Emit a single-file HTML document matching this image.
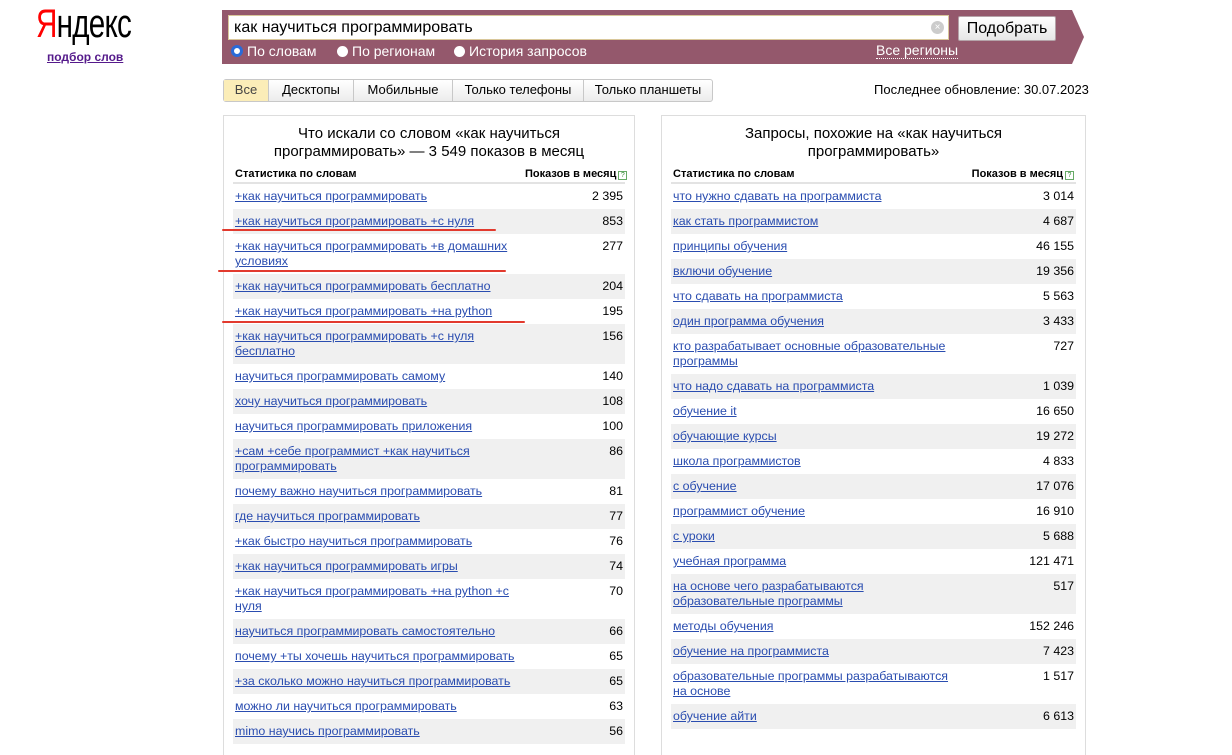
<!DOCTYPE html>
<html><head><meta charset="utf-8"><style>
*{box-sizing:border-box;margin:0;padding:0}
body{width:1232px;height:746px;overflow:hidden;background:#fff;font-family:"Liberation Sans",Arial,sans-serif;font-size:13px;color:#000;position:relative}
.logo{position:absolute;left:36px;top:2px;font-size:40px;letter-spacing:-1px;transform:scaleX(0.74);transform-origin:left top}
.logo b{color:#f00;font-weight:normal}
.sub{position:absolute;left:47px;top:50px;font-size:12px;font-weight:bold;color:#551a8b;text-decoration:underline}
.band{position:absolute;left:222px;top:10px;width:850px;height:54px;background:#94586c}
.tip{position:absolute;left:1072px;top:10px;width:0;height:0;border-top:27px solid transparent;border-bottom:27px solid transparent;border-left:12px solid #94586c}
.inp{position:absolute;left:228px;top:15px;width:721px;height:25px;background:#fff;border:1px solid #d9c79a;font-size:16px;padding:3px 5px}
.clr{position:absolute;left:931px;top:21px;width:13px;height:13px;border-radius:50%;background:#ccc;color:#fff;font-size:10px;line-height:13px;text-align:center}
.btn{position:absolute;left:958px;top:16px;width:98px;height:25px;background:linear-gradient(#fff,#e6e6e6);border:1px solid #b5a3a9;border-radius:2px;font-size:16px;text-align:center;line-height:23px}
.rad{position:absolute;top:43px;color:#fff;font-size:14px}
.rad i{display:inline-block;width:11px;height:11px;border-radius:50%;background:#fff;margin-right:4px;vertical-align:-1px}
.allr{position:absolute;left:876px;top:43px;color:#fff;font-size:14px;border-bottom:1px dotted #fff;line-height:15px}
.tabs{position:absolute;left:223px;top:79px;height:23px;display:flex;border:1px solid #c8c8c8;border-radius:3px;background:linear-gradient(#fff,#ececec)}
.tabs div{height:21px;line-height:20px;text-align:center;font-size:13px;border-left:1px solid #c8c8c8}
.tabs div:first-child{border-left:0;background:#fbedb8;color:#444}
.upd{position:absolute;left:874px;top:82px;font-size:13px}
.panel{position:absolute;top:115px;height:640px;border:1px solid #ddd;border-bottom:0}
.ttl{text-align:center;font-size:15px;line-height:18px;padding-top:9px;height:50px}
table{border-collapse:collapse;margin:0 9px;width:calc(100% - 18px);table-layout:fixed}
th{font-size:11px;font-weight:bold;text-align:left;padding:2px 2px 0;height:17px;line-height:13px;border-bottom:2px solid #e3e3e3;vertical-align:top;white-space:nowrap}
th.r{text-align:right}
.q{display:inline-block;width:9px;height:9px;border:1px solid #6a6;font-size:7px;line-height:7px;text-align:center;color:#383;font-weight:normal;margin-left:2px;vertical-align:0}
td{font-size:12.4px;line-height:15px;padding:5px 2px;vertical-align:top}
td a{color:#2a4db0;text-decoration:underline}
td.n{text-align:right;padding-right:2px}
tr.g td{background:#f0f0f0}
.red{position:absolute;height:2px;background:#e23a2e;border-radius:1px}
</style></head><body>
<div class="logo"><b>Я</b>ндекс</div>
<div class="sub">подбор слов</div>
<div class="band"></div><div class="tip"></div>
<div class="inp">как научиться программировать</div>
<div class="clr">×</div>
<div class="btn">Подобрать</div>
<div class="rad" style="left:231px"><i style="background:#fff;border:3px solid #2a6ad8;width:12px;height:12px"></i>По словам</div>
<div class="rad" style="left:337px"><i></i>По регионам</div>
<div class="rad" style="left:454px"><i></i>История запросов</div>
<div class="allr">Все регионы</div>
<div class="tabs"><div style="width:44px">Все</div><div style="width:85px">Десктопы</div><div style="width:99px">Мобильные</div><div style="width:131px">Только телефоны</div><div style="width:129px">Только планшеты</div></div>
<div class="upd">Последнее обновление: 30.07.2023</div>

<div class="panel" style="left:223px;width:412px">
<div class="ttl">Что искали со словом «как научиться<br>программировать» — 3 549 показов в месяц</div>
<table>
<colgroup><col style="width:290px"><col></colgroup>
<tr><th>Статистика по словам</th><th class="r">Показов в месяц<span class="q">?</span></th></tr>
<tr><td><a>+как научиться программировать</a></td><td class="n">2 395</td></tr>
<tr class="g"><td><a>+как научиться программировать +с нуля</a></td><td class="n">853</td></tr>
<tr><td><a>+как научиться программировать +в домашних<br>условиях</a></td><td class="n">277</td></tr>
<tr class="g"><td><a>+как научиться программировать бесплатно</a></td><td class="n">204</td></tr>
<tr><td><a>+как научиться программировать +на python</a></td><td class="n">195</td></tr>
<tr class="g"><td><a>+как научиться программировать +с нуля<br>бесплатно</a></td><td class="n">156</td></tr>
<tr><td><a>научиться программировать самому</a></td><td class="n">140</td></tr>
<tr class="g"><td><a>хочу научиться программировать</a></td><td class="n">108</td></tr>
<tr><td><a>научиться программировать приложения</a></td><td class="n">100</td></tr>
<tr class="g"><td><a>+сам +себе программист +как научиться<br>программировать</a></td><td class="n">86</td></tr>
<tr><td><a>почему важно научиться программировать</a></td><td class="n">81</td></tr>
<tr class="g"><td><a>где научиться программировать</a></td><td class="n">77</td></tr>
<tr><td><a>+как быстро научиться программировать</a></td><td class="n">76</td></tr>
<tr class="g"><td><a>+как научиться программировать игры</a></td><td class="n">74</td></tr>
<tr><td><a>+как научиться программировать +на python +с<br>нуля</a></td><td class="n">70</td></tr>
<tr class="g"><td><a>научиться программировать самостоятельно</a></td><td class="n">66</td></tr>
<tr><td style="white-space:nowrap"><a>почему +ты хочешь научиться программировать</a></td><td class="n">65</td></tr>
<tr class="g"><td style="white-space:nowrap"><a>+за сколько можно научиться программировать</a></td><td class="n">65</td></tr>
<tr><td><a>можно ли научиться программировать</a></td><td class="n">63</td></tr>
<tr class="g"><td><a>mimo научись программировать</a></td><td class="n">56</td></tr>
</table></div>

<div class="panel" style="left:661px;width:425px">
<div class="ttl">Запросы, похожие на «как научиться<br>программировать»</div>
<table>
<colgroup><col style="width:296px"><col></colgroup>
<tr><th>Статистика по словам</th><th class="r">Показов в месяц<span class="q">?</span></th></tr>
<tr><td><a>что нужно сдавать на программиста</a></td><td class="n">3 014</td></tr>
<tr class="g"><td><a>как стать программистом</a></td><td class="n">4 687</td></tr>
<tr><td><a>принципы обучения</a></td><td class="n">46 155</td></tr>
<tr class="g"><td><a>включи обучение</a></td><td class="n">19 356</td></tr>
<tr><td><a>что сдавать на программиста</a></td><td class="n">5 563</td></tr>
<tr class="g"><td><a>один программа обучения</a></td><td class="n">3 433</td></tr>
<tr><td><a>кто разрабатывает основные образовательные<br>программы</a></td><td class="n">727</td></tr>
<tr class="g"><td><a>что надо сдавать на программиста</a></td><td class="n">1 039</td></tr>
<tr><td><a>обучение it</a></td><td class="n">16 650</td></tr>
<tr class="g"><td><a>обучающие курсы</a></td><td class="n">19 272</td></tr>
<tr><td><a>школа программистов</a></td><td class="n">4 833</td></tr>
<tr class="g"><td><a>с обучение</a></td><td class="n">17 076</td></tr>
<tr><td><a>программист обучение</a></td><td class="n">16 910</td></tr>
<tr class="g"><td><a>с уроки</a></td><td class="n">5 688</td></tr>
<tr><td><a>учебная программа</a></td><td class="n">121 471</td></tr>
<tr class="g"><td><a>на основе чего разрабатываются<br>образовательные программы</a></td><td class="n">517</td></tr>
<tr><td><a>методы обучения</a></td><td class="n">152 246</td></tr>
<tr class="g"><td><a>обучение на программиста</a></td><td class="n">7 423</td></tr>
<tr><td><a>образовательные программы разрабатываются<br>на основе</a></td><td class="n">1 517</td></tr>
<tr class="g"><td><a>обучение айти</a></td><td class="n">6 613</td></tr>
</table></div>

<div class="red" style="left:222px;top:229px;width:274px"></div>
<div class="red" style="left:218px;top:270px;width:288px"></div>
<div class="red" style="left:222px;top:321px;width:303px"></div>
</body></html>
